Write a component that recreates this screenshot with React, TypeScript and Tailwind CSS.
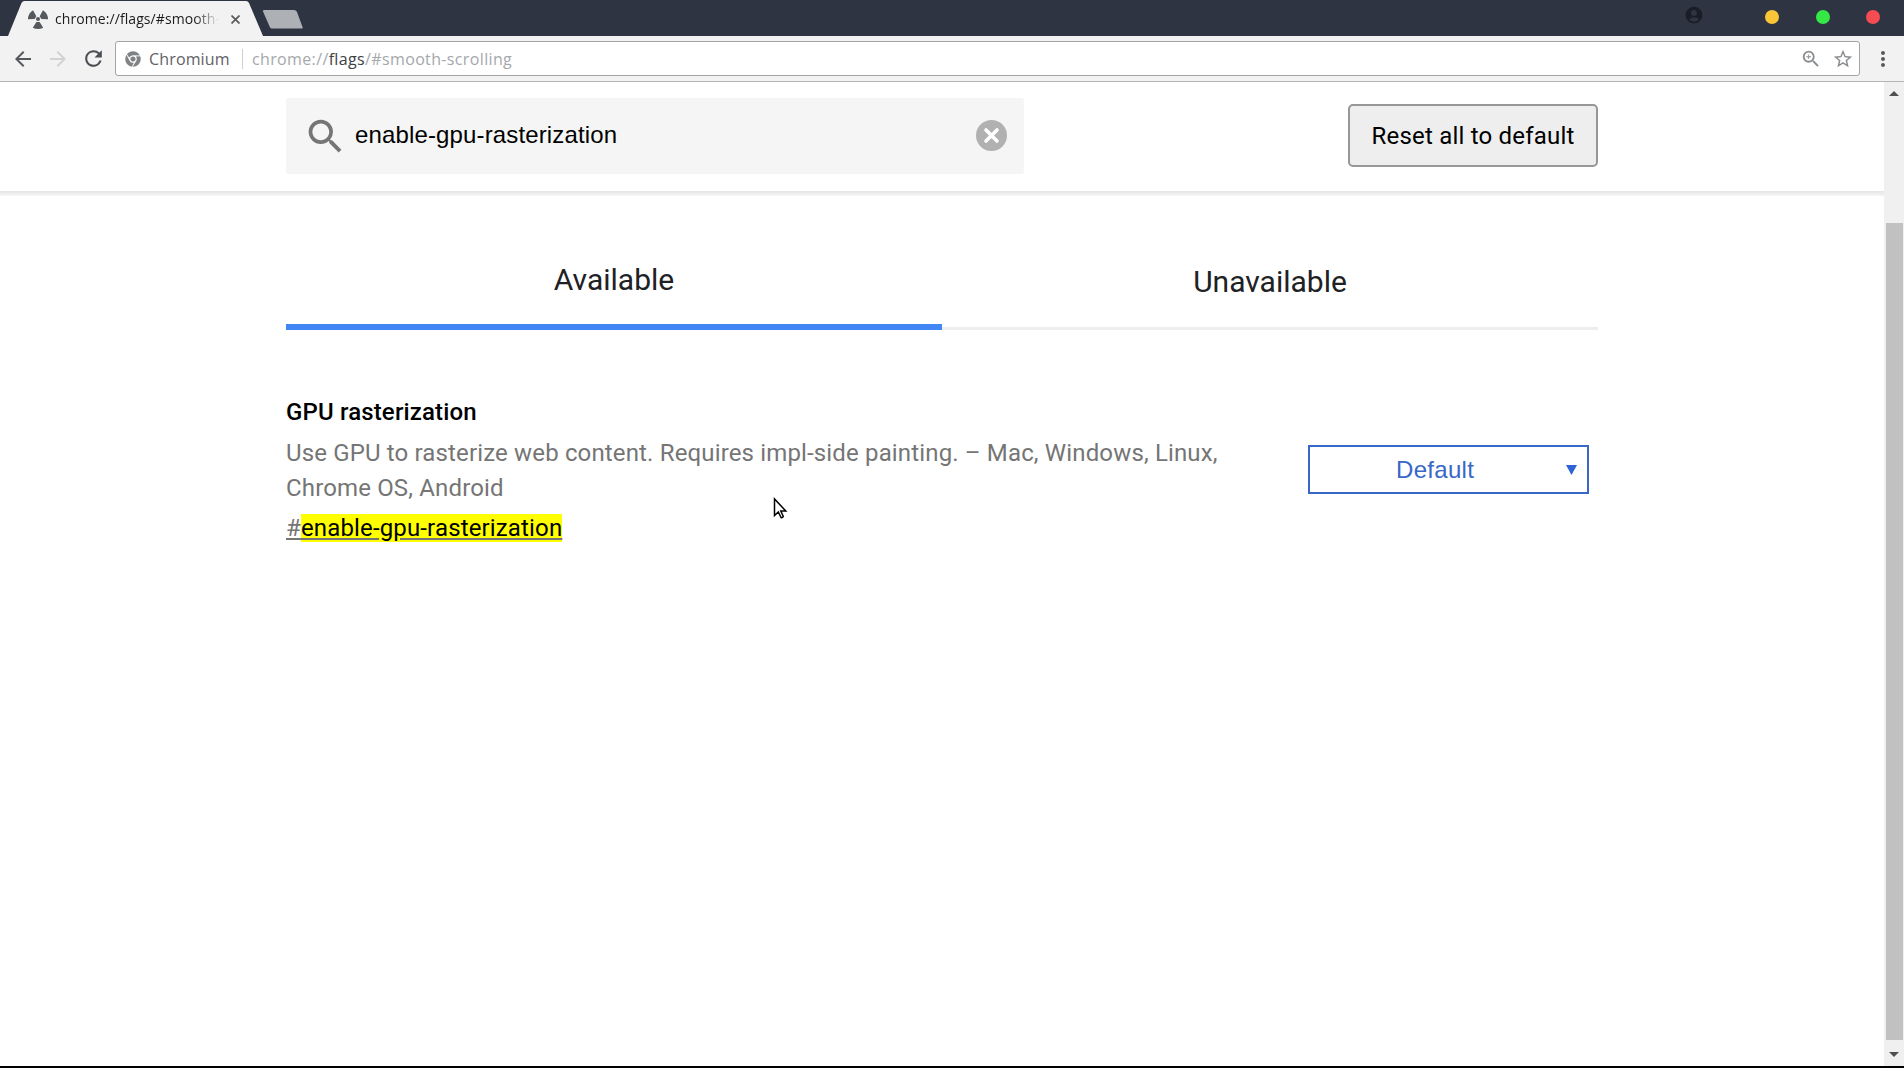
import {
  MdAccountCircle,
  MdArrowBack,
  MdArrowForward,
  MdMoreVert,
  MdRefresh,
  MdSearch,
  MdStarBorder,
  MdZoomIn,
} from "react-icons/md";
import { FaChrome } from "react-icons/fa";

function RadiationIcon() {
  const blade = "M8.4 12.9 h3.2 l3.6 5.8 q-5.2 2.6 -10.4 0 z";
  return (
    <svg width="20" height="20" viewBox="0 0 20 20" fill="#55585c">
      <circle cx="10" cy="10" r="2" />
      <path d={blade} />
      <path d={blade} transform="rotate(120 10 10)" />
      <path d={blade} transform="rotate(240 10 10)" />
    </svg>
  );
}

function TabStrip() {
  return (
    <div className="flex h-9 shrink-0 justify-between bg-[#2f3442]">
      <div className="flex">
        <div className="relative ml-2 h-9 w-[255px]">
          <svg
            className="absolute inset-0"
            width="255"
            height="36"
            viewBox="0 0 255 36"
          >
            <path
              d="M0 36 L13.5 3 Q14.5 1 16.5 1 H238 Q240 1 241 3 L255 36 Z"
              fill="#f2f2f2"
            />
          </svg>
          <div className="relative flex h-full items-center pt-0.5 pl-5">
            <RadiationIcon />
            <span className="ml-[7px] w-[164px] overflow-hidden whitespace-nowrap text-[14px] leading-6 tracking-[0.08px] text-[#1c1c1c] [mask-image:linear-gradient(to_right,black_85%,transparent)]">
              chrome://flags/#smooth-
            </span>
            <svg
              className="ml-3"
              width="9"
              height="9"
              viewBox="0 0 9 9"
              stroke="#5a5a5a"
              strokeWidth="1.7"
            >
              <path d="M0.5 0.5 L8.5 8.5 M8.5 0.5 L0.5 8.5" />
            </svg>
          </div>
        </div>
        <svg className="mt-2.5" width="42" height="19" viewBox="0 0 42 19">
          <path
            d="M1 0 H31 Q33 0 33.8 1.6 L39.5 17 Q40 18.5 38.5 18.5 H9 Q7.4 18.5 6.8 17 L0 1.5 Q-0.2 0 1 0 Z"
            fill="#adb0b5"
          />
        </svg>
      </div>
      <div className="flex h-[34px] items-center pr-6">
        <MdAccountCircle className="mr-[61px] mb-1 size-5 text-[#191d28]" />
        <span className="mr-[37px] size-3.5 rounded-full bg-[#fac536]" />
        <span className="mr-9 size-3.5 rounded-full bg-[#35e845]" />
        <span className="size-3.5 rounded-full bg-[#f44c52]" />
      </div>
    </div>
  );
}

function Toolbar() {
  return (
    <div className="flex h-[46px] shrink-0 items-center border-b border-[#b4b4b4] bg-[#f2f2f2] pl-[11px]">
      <MdArrowBack className="size-6 text-[#55585c]" />
      <MdArrowForward className="ml-[11px] size-6 text-[#d2d2d2]" />
      <MdRefresh className="ml-[11px] size-[25px] text-[#4c4f53]" />
      <div className="ml-[9px] flex h-[35px] w-[1745px] items-center rounded-[3px] border border-[#a4a4a4] bg-white pl-[9px]">
        <FaChrome className="size-4 text-[#808386]" />
        <span className="ml-2 w-[81px] whitespace-nowrap text-[16px] leading-6 tracking-[0.15px] text-[#5f6266]">
          Chromium
        </span>
        <span className="ml-3 h-5 w-px bg-[#cfcfcf]" />
        <span className="ml-[9px] whitespace-nowrap text-[16px] leading-6 tracking-[0.36px] text-[#a5a8ab]">
          chrome://<span className="text-[#3c3f43]">flags</span>
          /#smooth-scrolling
        </span>
        <MdZoomIn className="ml-auto size-[22px] text-[#8a8d90]" />
        <MdStarBorder className="mr-[5px] ml-2.5 size-[22px] text-[#8a8d90]" />
      </div>
      <MdMoreVert className="ml-[11px] size-6 text-[#5a5a5a]" />
    </div>
  );
}

function Header() {
  return (
    <header>
      <div className="flex h-[109px] items-start justify-between px-[286px] pt-4">
        <div className="flex h-[76px] w-[738px] items-center rounded-[3px] bg-[#f5f5f5] px-[17px]">
          <MdSearch className="size-[45px] text-[#757575]" />
          <span className="mb-0.5 ml-[7px] font-['Liberation_Sans',Arial,sans-serif] text-[24px] leading-8 tracking-[0.14px] text-black">
            enable-gpu-rasterization
          </span>
          <svg
            className="mb-px ml-auto"
            width="31"
            height="31"
            viewBox="0 0 31 31"
          >
            <circle cx="15.5" cy="15.5" r="15.5" fill="#b1b1b1" />
            <path
              d="M10 10 L21 21 M21 10 L10 21"
              stroke="white"
              strokeWidth="3.6"
              strokeLinecap="round"
            />
          </svg>
        </div>
        <button className="mt-1.5 h-[63px] w-[250px] rounded-[5px] border-2 border-[#979797] bg-[#eeeeee] text-[24px] tracking-[0.2px] text-black">
          Reset all to default
        </button>
      </div>
      <div className="h-[5px] bg-linear-to-b from-[#e4e4e4] to-[#f6f6f6]" />
    </header>
  );
}

function Tabs() {
  return (
    <div className="mx-[286px] flex h-[134px] items-end text-center text-[30px] leading-9 text-[#202124]">
      <div className="w-1/2 border-b-[6px] border-[#4285f4] pb-[26px]">
        Available
      </div>
      <div className="w-1/2 border-b-[3px] border-[#eeeeee] pb-[27px]">
        Unavailable
      </div>
    </div>
  );
}

function Experiment() {
  return (
    <div className="mx-[286px] mt-[65px] flex justify-between text-[24px] leading-[35px]">
      <div className="w-[960px]">
        <h3 className="font-medium tracking-[0.15px] text-black">
          GPU rasterization
        </h3>
        <p className="mt-1.5 tracking-[0.15px] text-[#757575]">
          Use GPU to rasterize web content. Requires impl-side painting. – Mac,
          Windows, Linux,
          <br />
          Chrome OS, Android
        </p>
        <a className="mt-[5px] block tracking-[0.15px] text-[#757575] underline">
          #<mark className="bg-[#ffff00] text-black">enable-gpu-rasterization</mark>
        </a>
      </div>
      <div className="mt-[50px] mr-[9px] flex h-[49px] w-[281px] items-center border-2 border-[#3867c8] pr-2.5 font-['Liberation_Sans',Arial,sans-serif] text-[#3867c8]">
        <span className="mb-px ml-[86px] tracking-[0.3px]">Default</span>
        <svg className="ml-auto" width="11" height="10" viewBox="0 0 11 10">
          <path d="M0 0 H11 L5.5 10 Z" fill="#2f62d4" />
        </svg>
      </div>
    </div>
  );
}

function Scrollbar() {
  return (
    <div className="flex w-5 shrink-0 flex-col items-center bg-[#f0f0f0]">
      <svg className="mt-[9px]" width="10" height="5" viewBox="0 0 10 5">
        <path d="M0 5 L5 0 L10 5 Z" fill="#505050" />
      </svg>
      <div className="mt-[127px] h-[817px] w-[17px] bg-[#c1c1c1]" />
      <svg className="mt-3" width="10" height="5" viewBox="0 0 10 5">
        <path d="M0 0 H10 L5 5 Z" fill="#505050" />
      </svg>
    </div>
  );
}

export default function App() {
  return (
    <div className="relative flex h-[1068px] w-[1904px] flex-col overflow-hidden border-b-2 border-black bg-white font-['Roboto',sans-serif]">
      <div className="font-['Open_Sans',sans-serif]">
        <TabStrip />
        <Toolbar />
      </div>
      <div className="flex flex-1">
        <main className="flex-1">
          <Header />
          <Tabs />
          <Experiment />
        </main>
        <Scrollbar />
      </div>

      {/* mouse pointer */}
      <svg
        className="absolute top-[497px] left-[773px]"
        width="16"
        height="23"
        viewBox="0 0 16 23"
      >
        <path
          d="M1.5 2 V18.5 L5.3 15 L8 20.5 Q9.5 21 10.3 19.5 L7.8 14 H12.8 Z"
          fill="white"
          stroke="black"
          strokeWidth="1.5"
        />
      </svg>
    </div>
  );
}
